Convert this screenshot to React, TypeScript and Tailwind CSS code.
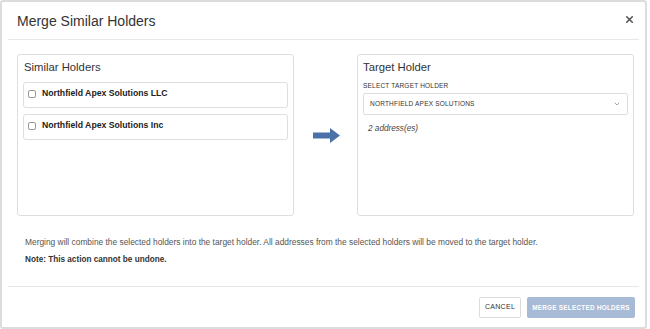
import { ChevronDown, X } from "lucide-react"

const holders = ["Northfield Apex Solutions LLC", "Northfield Apex Solutions Inc"]

export default function App() {
  return (
    <div className="w-[650px] h-[329px] bg-white font-['Liberation_Sans',Arial,sans-serif]">
      <div className="w-[647px] h-[329px] border-2 border-[#dcdcdc] rounded-[3px] flex flex-col">
        {/* header */}
        <div className="mx-[6px] h-[38px] border-b border-[#e8e8e8] flex items-center justify-between pl-[9px] pr-[4px]">
          <h1 className="text-[14px] text-[#333] pt-[2px]">Merge Similar Holders</h1>
          <X className="w-[11px] h-[11px] text-[#555] mb-[2px]" strokeWidth={3.5} />
        </div>

        {/* body */}
        <div className="pl-[15px] pr-[11px] pt-[14px] flex items-stretch">
          <div className="w-[277px] h-[162px] border border-[#dedede] rounded-[3px] px-[5px] pt-[4px]">
            <h2 className="text-[11.3px] text-[#333] leading-[16px] pl-[1px]">Similar Holders</h2>
            <div className="mt-[7px] flex flex-col gap-[6px]">
              {holders.map((h) => (
                <label
                  key={h}
                  className="h-[26px] border border-[#dedede] rounded-[3px] flex items-center pl-[4px] pb-[2px]"
                >
                  <span className="w-[8px] h-[8px] border border-[#999] rounded-[2px] mr-[6px] bg-white" />
                  <span className="text-[8.7px] font-bold text-[#222]">{h}</span>
                </label>
              ))}
            </div>
          </div>

          <div className="flex-1 flex items-center justify-center pt-[1px] pl-[2px]">
            <svg width="27" height="15" viewBox="0 0 27 15">
              <path d="M0 4.5 H17 V0 L27 7.5 L17 15 V10.5 H0 Z" fill="#4a72a8" />
            </svg>
          </div>

          <div className="w-[277px] h-[162px] border border-[#dedede] rounded-[3px] px-[5px] pt-[4px]">
            <h2 className="text-[11.3px] text-[#333] leading-[16px]">Target Holder</h2>
            <div className="mt-[7px] text-[6.5px] text-[#333] tracking-[0.2px] leading-[8px]">SELECT TARGET HOLDER</div>
            <div className="mt-[3px] h-[22px] border border-[#dedede] rounded-[2px] flex items-center justify-between pl-[6px] pr-[6px]">
              <span className="text-[6.5px] text-[#333] tracking-[0.2px]">NORTHFIELD APEX SOLUTIONS</span>
              <ChevronDown className="w-[8px] h-[8px] text-[#777]" strokeWidth={2} />
            </div>
            <div className="mt-[8px] pl-[5px] text-[8.2px] italic text-[#444]">2 address(es)</div>
          </div>
        </div>

        {/* message */}
        <div className="px-[23px] pt-[21px] text-[8.4px] text-[#555] leading-[11px]">
          <p>
            Merging will combine the selected holders into the target holder. All addresses from the selected holders
            will be moved to the target holder.
          </p>
          <p className="mt-[6px] font-bold text-[8.2px] text-[#333]">Note: This action cannot be undone.</p>
        </div>

        {/* footer */}
        <div className="mt-[21px] mx-[6px] border-t border-[#e8e8e8] flex justify-end gap-[6px] pt-[10px] pr-[4px]">
          <button className="h-[21px] w-[42px] border border-[#dcdcdc] rounded-[2px] text-[7px] text-[#333] tracking-[0.3px] bg-white">
            CANCEL
          </button>
          <button className="h-[21px] w-[108px] rounded-[2px] text-[6.3px] font-bold text-white tracking-[0.3px] bg-[#a7bad6]">
            MERGE SELECTED HOLDERS
          </button>
        </div>
      </div>
    </div>
  )
}
